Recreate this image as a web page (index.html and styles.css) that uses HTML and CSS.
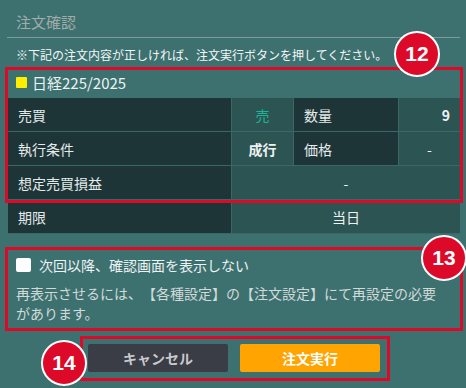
FILE: index.html
```html
<!DOCTYPE html>
<html lang="ja">
<head>
  <meta charset="UTF-8">
  <meta name="viewport" content="width=device-width, initial-scale=1.0">
  <title>注文確認</title>
  <link rel="stylesheet" href="styles.css">
</head>
<body>
  <main class="dialog">
    <h1 class="dialog-title">注文確認</h1>
    <p class="notice">※下記の注文内容が正しければ、注文実行ボタンを押してください。</p>

    <section class="mark">
      <span class="badge">12</span>
      <div class="product">
        <span class="product-icon"></span>
        <span>日経225/2025</span>
      </div>
      <div class="order-grid">
        <div class="cell label">売買</div>
        <div class="cell value center sell">売</div>
        <div class="cell label">数量</div>
        <div class="cell value right strong">9</div>

        <div class="cell label">執行条件</div>
        <div class="cell value center strong">成行</div>
        <div class="cell label">価格</div>
        <div class="cell value center">-</div>

        <div class="cell label">想定売買損益</div>
        <div class="cell value center wide">-</div>
      </div>
    </section>

    <div class="order-grid last">
      <div class="cell label">期限</div>
      <div class="cell value center wide">当日</div>
    </div>

    <section class="mark confirm">
      <span class="badge">13</span>
      <label class="skip">
        <span class="checkbox"></span>
        次回以降、確認画面を表示しない
      </label>
      <p class="skip-note">再表示させるには、【各種設定】の【注文設定】にて再設定の必要があります。</p>
    </section>

    <section class="mark actions">
      <span class="badge">14</span>
      <button class="btn btn-cancel" type="button">キャンセル</button>
      <button class="btn btn-submit" type="button">注文実行</button>
    </section>
  </main>
</body>
</html>
```

FILE: styles.css
```css
/* Reset */
*, *::before, *::after {
  box-sizing: border-box;
  margin: 0;
  padding: 0;
}

:root {
  --bg: #3c7170;
  --cell-dark: #1e3538;
  --cell-light: #2c5452;
  --cell-line: #3a6866;
  --text: #eef2f2;
  --muted: #d2d9d9;
  --mark: #dc0a28;
}

body {
  font-family: "Noto Sans CJK JP", "Noto Sans", sans-serif;
  text-spacing-trim: space-all;
  background: var(--bg);
  color: var(--text);
  width: 466px;
  height: 388px;
  overflow: hidden;
}

.dialog {
  padding: 0 6px 0 8px;
}

.dialog-title {
  font-size: 15px;
  font-weight: 400;
  line-height: 20px;
  color: #a3abab;
  padding: 12px 0 5px 9px;
  border-bottom: 1px solid #7f9b99;
  margin-left: -1px;
}

.notice {
  font-size: 12px;
  line-height: 18px;
  margin: 8px 0 6px 8px;
  color: #f4f6f6;
}

/* Annotation frames */
.mark {
  position: relative;
  outline: 3px solid var(--mark);
}

.badge {
  position: absolute;
  width: 46px;
  height: 46px;
  border-radius: 50%;
  background: var(--mark);
  border: 2px solid #fff;
  color: #fff;
  font-family: "Liberation Sans", Arial, sans-serif;
  font-weight: 700;
  font-size: 21px;
  display: grid;
  place-items: center;
  z-index: 2;
}

.mark > .badge { left: 386px; top: -39px; }
.confirm > .badge { left: 413px; top: -15px; }
.actions > .badge { left: -42px; top: 1px; }

/* Product header */
.product {
  display: flex;
  align-items: center;
  gap: 5px;
  height: 28px;
  padding: 0 0 4px 8px;
  font-size: 15px;
}

.product-icon {
  width: 11px;
  height: 11px;
  background: #ffee00;
  border-radius: 1px;
}

/* Order table */
.order-grid {
  display: grid;
  grid-template-columns: 223px 61px 104px 61px;
  grid-auto-rows: 33px;
  gap: 1px;
  padding-bottom: 1px;
  background: var(--cell-line);
}

.cell {
  display: flex;
  align-items: center;
  padding: 0 10px;
  font-size: 14px;
}

.label {
  background: var(--cell-dark);
  color: #e4eaea;
}

.value {
  background: var(--cell-light);
}

.center { justify-content: center; }
.right { justify-content: flex-end; }
.wide { grid-column: span 3; }
.strong { font-weight: 700; }

.sell {
  color: #1fb398;
}

/* Skip confirmation */
.confirm {
  margin-top: 16px;
  padding: 7px 14px 5px 8px;
}

.skip {
  display: flex;
  align-items: center;
  gap: 8px;
  height: 16px;
  font-size: 14px;
}

.checkbox {
  width: 15px;
  height: 14px;
  background: #fff;
  border-radius: 2px;
}

.skip-note {
  margin-top: 10px;
  font-size: 14px;
  line-height: 20px;
  color: var(--muted);
}

/* Buttons */
.actions {
  display: flex;
  gap: 12px;
  width: 304px;
  margin: 11px 0 0 75px;
  padding: 5px 7px 6px 5px;
}

.btn {
  width: 140px;
  height: 28px;
  border: 0;
  border-radius: 2px;
  font-family: inherit;
  font-size: 14px;
  font-weight: 700;
}

.btn-cancel {
  background: #3a3c46;
  color: #c9c9cc;
}

.btn-submit {
  background: #ffa400;
  color: #fff;
}
```
